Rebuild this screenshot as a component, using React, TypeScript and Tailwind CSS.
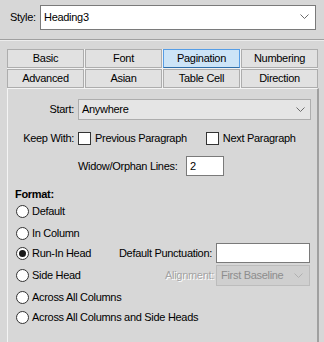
function Chevron({ color = "#6b6b6b" }: { color?: string }) {
  return (
    <svg width="9" height="6" viewBox="0 0 9 6" className="shrink-0">
      <polyline points="0.5,0.5 4.5,4.5 8.5,0.5" fill="none" stroke={color} strokeWidth="1" />
    </svg>
  )
}

function Radio({ label, checked = false }: { label: string; checked?: boolean }) {
  return (
    <div className="flex items-center h-[20px]">
      <span className="w-[13px] h-[13px] rounded-full border border-[#333333] bg-white flex items-center justify-center">
        {checked && <span className="w-[7px] h-[7px] rounded-full bg-[#1a1a1a]" />}
      </span>
      <span className="ml-[3px]">{label}</span>
    </div>
  )
}

const tabs = ["Basic", "Font", "Pagination", "Numbering", "Advanced", "Asian", "Table Cell", "Direction"]

export default function App() {
  return (
    <div className="w-[324px] h-[342px] overflow-hidden bg-[#d7d7d7] text-black text-[11px] leading-none tracking-[-0.3px] font-['Liberation_Sans',Arial,sans-serif]">
      {/* style row */}
      <div className="flex items-center pl-[10px] pt-[4px] h-[30px]">
        <span className="w-[30px]">Style:</span>
        <div className="w-[276px] h-[25px] bg-white border border-[#7a7a7a] flex items-center pl-[3px] pr-[6px]">
          <span className="flex-1">Heading3</span>
          <Chevron />
        </div>
      </div>

      <div className="mt-[9px] border-t border-[#a0a0a0] border-b border-b-[#ececec]" />

      {/* tabs */}
      <div className="mt-[8px] ml-[7px] w-[311px] grid grid-cols-4 gap-px bg-[#f2f2f2]">
        {tabs.map((t) => (
          <div
            key={t}
            className={
              t === "Pagination"
                ? "h-[19px] flex items-center justify-center bg-[#cce4f7] border border-[#569de5] border-b-[#2f6ea8]"
                : "h-[19px] flex items-center justify-center bg-[#e1e1e1] border border-[#adadad]"
            }
          >
            {t}
          </div>
        ))}
      </div>

      {/* panel */}
      <div className="ml-[7px] w-[312px] h-[260px] border-l border-t border-[#f4f4f4] border-r-2 border-r-[#a0a0a0] bg-[#d7d7d7]">
        <div className="flex items-center mt-[10px] h-[21px]">
          <span className="w-[66px] text-right">Start:</span>
          <div className="ml-[4px] w-[233px] h-[21px] bg-[#e5e5e5] border border-[#adadad] flex items-center pl-[3px] pr-[5px]">
            <span className="flex-1">Anywhere</span>
            <Chevron />
          </div>
        </div>

        <div className="flex items-center mt-[10px] h-[16px]">
          <span className="w-[66px] text-right">Keep With:</span>
          <span className="ml-[4px] w-[13px] h-[13px] bg-white border border-[#333333]" />
          <span className="ml-[4px]">Previous Paragraph</span>
          <span className="ml-[19px] w-[13px] h-[13px] bg-white border border-[#333333]" />
          <span className="ml-[4px]">Next Paragraph</span>
        </div>

        <div className="flex items-center mt-[10px] h-[20px] pl-[70px]">
          <span className="w-[105px]">Widow/Orphan Lines:</span>
          <div className="ml-[3px] w-[38px] h-[20px] bg-white border border-[#7a7a7a] flex items-center pl-[3px]">2</div>
        </div>

        <div className="mt-[12px] h-[13px] pl-[7px] flex items-center font-bold">Format:</div>

        <div className="pl-[8px] pr-[7px]">
          <Radio label="Default" />
          <div className="mt-[2px]">
            <Radio label="In Column" />
          </div>
          <div className="flex items-center h-[20px]">
            <Radio label="Run-In Head" checked />
            <span className="ml-auto">Default Punctuation:</span>
            <div className="ml-[4px] w-[94px] h-[20px] bg-white border border-[#7a7a7a]" />
          </div>
          <div className="flex items-center h-[21px] mt-[2px]">
            <Radio label="Side Head" />
            <span className="ml-auto text-[#a3a3a3] [text-shadow:1px_1px_0_#ffffff]">Alignment:</span>
            <div className="ml-[2px] w-[94px] h-[21px] bg-[#cfcfcf] border border-[#bcbcbc] flex items-center pl-[4px] pr-[6px] text-[#8d8d8d]">
              <span className="flex-1">First Baseline</span>
              <Chevron color="#b0b0b0" />
            </div>
          </div>
          <div className="mt-[1px]">
            <Radio label="Across All Columns" />
          </div>
          <Radio label="Across All Columns and Side Heads" />
        </div>
      </div>
    </div>
  )
}
